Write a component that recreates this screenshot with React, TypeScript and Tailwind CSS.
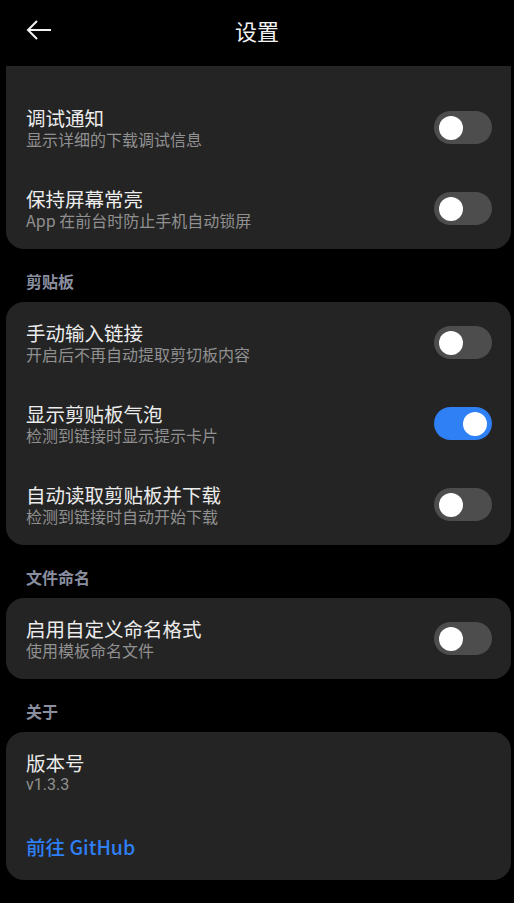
import { useState } from "react";

type Row = { title: string; desc: string; on?: boolean };

function Toggle({ on, onClick }: { on: boolean; onClick: () => void }) {
  return (
    <button
      onClick={onClick}
      className={`flex h-[33px] w-[58px] shrink-0 items-center rounded-full px-[5px] ${
        on ? "justify-end bg-[#2f7ff5]" : "justify-start bg-[#4d4d4d]"
      }`}
    >
      <span className="h-[24px] w-[24px] rounded-full bg-white" />
    </button>
  );
}

function SettingRow({ row }: { row: Row }) {
  const [on, setOn] = useState(!!row.on);
  return (
    <div className="flex h-[81px] items-center justify-between pl-[20px] pr-[19px]">
      <div className="flex flex-col">
        <span className="text-[19.5px] leading-[23px] text-[#ececec]">{row.title}</span>
        <span className="text-[16px] leading-[21px] text-[#909090]">{row.desc}</span>
      </div>
      <Toggle on={on} onClick={() => setOn(!on)} />
    </div>
  );
}

function Section({ title }: { title: string }) {
  return (
    <div className="pl-[20px] pt-[22px] pb-[10px] text-[16px] font-bold leading-[21px] text-[#8a8fa0]">
      {title}
    </div>
  );
}

export default function App() {
  return (
    <div
      className="h-[903px] overflow-hidden bg-black"
      style={{ fontFamily: '"Noto Sans CJK SC", "Noto Sans", sans-serif' }}
    >
      <header className="relative flex h-[66px] items-start justify-center pt-[15px]">
        <svg
          className="absolute left-[26px] top-[19px]"
          width="27"
          height="22"
          viewBox="0 0 27 22"
          fill="none"
          stroke="#f2f2f2"
          strokeWidth="2"
        >
          <path d="M25 11H2M11 2L2 11l9 9" />
        </svg>
        <h1 className="text-[22px] leading-[30px] text-[#f2f2f2]">设置</h1>
      </header>

      <div className="ml-[6px] mr-[3px]">
        <div className="rounded-b-[18px] bg-[#242424] pt-[21px]">
          <SettingRow row={{ title: "调试通知", desc: "显示详细的下载调试信息" }} />
          <SettingRow row={{ title: "保持屏幕常亮", desc: "App 在前台时防止手机自动锁屏" }} />
        </div>

        <Section title="剪贴板" />
        <div className="rounded-[18px] bg-[#242424]">
          <SettingRow row={{ title: "手动输入链接", desc: "开启后不再自动提取剪切板内容" }} />
          <SettingRow row={{ title: "显示剪贴板气泡", desc: "检测到链接时显示提示卡片", on: true }} />
          <SettingRow row={{ title: "自动读取剪贴板并下载", desc: "检测到链接时自动开始下载" }} />
        </div>

        <Section title="文件命名" />
        <div className="rounded-[18px] bg-[#242424]">
          <SettingRow row={{ title: "启用自定义命名格式", desc: "使用模板命名文件" }} />
        </div>

        <Section title="关于" />
        <div className="rounded-[18px] bg-[#242424]">
          <div className="flex h-[81px] flex-col justify-center pl-[20px]">
            <span className="text-[19.5px] leading-[23px] text-[#ececec]">版本号</span>
            <span className="text-[16px] leading-[21px] text-[#909090]" style={{ fontFamily: '"Roboto", "Noto Sans CJK SC", sans-serif' }}>v1.3.3</span>
          </div>
          <a className="flex h-[67px] items-center pl-[20px] text-[19.5px] font-medium text-[#2f7ff5]">
            前往 GitHub
          </a>
        </div>
      </div>
    </div>
  );
}
